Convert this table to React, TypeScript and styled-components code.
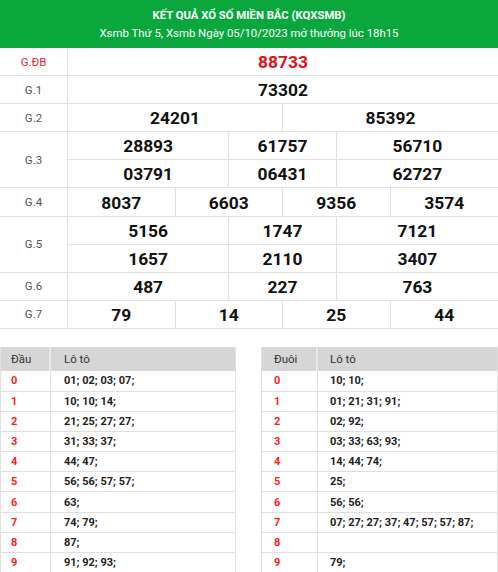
import React from "react";
import styled, { createGlobalStyle } from "styled-components";

const Global = createGlobalStyle`
  html, body { margin: 0; padding: 0; background: #fff; }
  body { font-family: Roboto, "Liberation Sans", Arial, sans-serif; width: 498px; overflow: hidden; }
  * { box-sizing: border-box; }
`;

const Page = styled.div`
  width: 498px;
`;

const Header = styled.div`
  background: #0aa83c;
  height: 48px;
  color: #fff;
  display: flex;
  flex-direction: column;
  align-items: center;
  justify-content: center;
  gap: 3px;
  padding-top: 1px;
`;

const Title = styled.div`
  font-weight: 700;
  font-size: 11.3px;
  line-height: 14px;
`;

const Sub = styled.div`
  font-size: 11.4px;
  line-height: 14px;
`;

const Board = styled.div`
  display: grid;
  grid-template-columns: 68px repeat(8, 1fr);
  grid-auto-rows: 28.1px;
`;

const Label = styled.div<{ $rows?: number; $red?: boolean }>`
  grid-row: span ${(p) => p.$rows ?? 1};
  grid-column: 1;
  display: flex;
  align-items: center;
  justify-content: center;
  font-size: 11.5px;
  color: ${(p) => (p.$red ? "#e3282f" : "#555")};
  border-bottom: 1px solid #e0e0e0;
  border-right: 1px solid #e0e0e0;
`;

const Num = styled.div<{ $span: number; $red?: boolean; $last?: boolean }>`
  grid-column: span ${(p) => p.$span};
  display: flex;
  align-items: center;
  justify-content: center;
  padding-top: 1px;
  font-size: 17.4px;
  font-weight: 700;
  color: ${(p) => (p.$red ? "#e0101a" : "#111")};
  border-bottom: 1px solid #e0e0e0;
  border-right: ${(p) => (p.$last ? "none" : "1px solid #e0e0e0")};
`;

const LotoWrap = styled.div`
  display: grid;
  grid-template-columns: 236px 237px;
  column-gap: 25px;
  margin-top: 18px;
`;

const Loto = styled.div<{ $first: number }>`
  display: grid;
  grid-template-columns: ${(p) => p.$first}px 1fr;
  grid-template-rows: 24.4px;
  grid-auto-rows: 20.2px;
  border-left: 1px solid #e0e0e0;
  border-right: 1px solid #e0e0e0;
`;

const Th = styled.div<{ $pad: number; $div?: boolean }>`
  background: #d6d6d6;
  display: flex;
  align-items: center;
  padding-left: ${(p) => p.$pad}px;
  font-size: 11.5px;
  color: #333;
  border-right: ${(p) => (p.$div ? "2px solid #e8e8e8" : "none")};
`;

const Td = styled.div<{ $pad: number; $red?: boolean; $div?: boolean }>`
  display: flex;
  align-items: center;
  padding-left: ${(p) => p.$pad}px;
  font-size: 11px;
  font-weight: 700;
  color: ${(p) => (p.$red ? "#ff1a1a" : "#222")};
  border-bottom: 1px solid #e0e0e0;
  border-right: ${(p) => (p.$div ? "1px solid #e0e0e0" : "none")};
  white-space: nowrap;
`;

type Row = { label: string; rows?: number; red?: boolean; nums: [string, number][] };

const prizes: Row[] = [
  { label: "G.ĐB", red: true, nums: [["88733", 8]] },
  { label: "G.1", nums: [["73302", 8]] },
  { label: "G.2", nums: [["24201", 4], ["85392", 4]] },
  {
    label: "G.3",
    rows: 2,
    nums: [
      ["28893", 3], ["61757", 2], ["56710", 3],
      ["03791", 3], ["06431", 2], ["62727", 3],
    ],
  },
  { label: "G.4", nums: [["8037", 2], ["6603", 2], ["9356", 2], ["3574", 2]] },
  {
    label: "G.5",
    rows: 2,
    nums: [
      ["5156", 3], ["1747", 2], ["7121", 3],
      ["1657", 3], ["2110", 2], ["3407", 3],
    ],
  },
  { label: "G.6", nums: [["487", 3], ["227", 2], ["763", 3]] },
  { label: "G.7", nums: [["79", 2], ["14", 2], ["25", 2], ["44", 2]] },
];

const dau = [
  "01; 02; 03; 07;",
  "10; 10; 14;",
  "21; 25; 27; 27;",
  "31; 33; 37;",
  "44; 47;",
  "56; 56; 57; 57;",
  "63;",
  "74; 79;",
  "87;",
  "91; 92; 93;",
];

const duoi = [
  "10; 10;",
  "01; 21; 31; 91;",
  "02; 92;",
  "03; 33; 63; 93;",
  "14; 44; 74;",
  "25;",
  "56; 56;",
  "07; 27; 27; 37; 47; 57; 57; 87;",
  "",
  "79;",
];

function LotoTable({ head, data, first, pad1, pad2 }: { head: string; data: string[]; first: number; pad1: number; pad2: number }) {
  return (
    <Loto $first={first}>
      <Th $pad={pad1} $div>{head}</Th>
      <Th $pad={pad2}>Lô tô</Th>
      {data.map((d, i) => (
        <React.Fragment key={i}>
          <Td $pad={pad1} $red $div>{i}</Td>
          <Td $pad={pad2}>{d}</Td>
        </React.Fragment>
      ))}
    </Loto>
  );
}

export default function App() {
  return (
    <Page>
      <Global />
      <Header>
        <Title>KẾT QUẢ XỔ SỐ MIỀN BẮC (KQXSMB)</Title>
        <Sub>Xsmb Thứ 5, Xsmb Ngày 05/10/2023 mở thưởng lúc 18h15</Sub>
      </Header>
      <Board>
        {prizes.map((p) => (
          <React.Fragment key={p.label}>
            <Label $rows={p.rows} $red={p.red}>{p.label}</Label>
            {p.nums.map(([n, s], i) => {
              const perRow = p.rows === 2 ? p.nums.length / 2 : p.nums.length;
              return (
                <Num key={i} $span={s} $red={p.red} $last={i % perRow === perRow - 1}>
                  {n}
                </Num>
              );
            })}
          </React.Fragment>
        ))}
      </Board>
      <LotoWrap>
        <LotoTable head="Đầu" data={dau} first={50} pad1={10} pad2={13} />
        <LotoTable head="Đuôi" data={duoi} first={56} pad1={12} pad2={12} />
      </LotoWrap>
    </Page>
  );
}
